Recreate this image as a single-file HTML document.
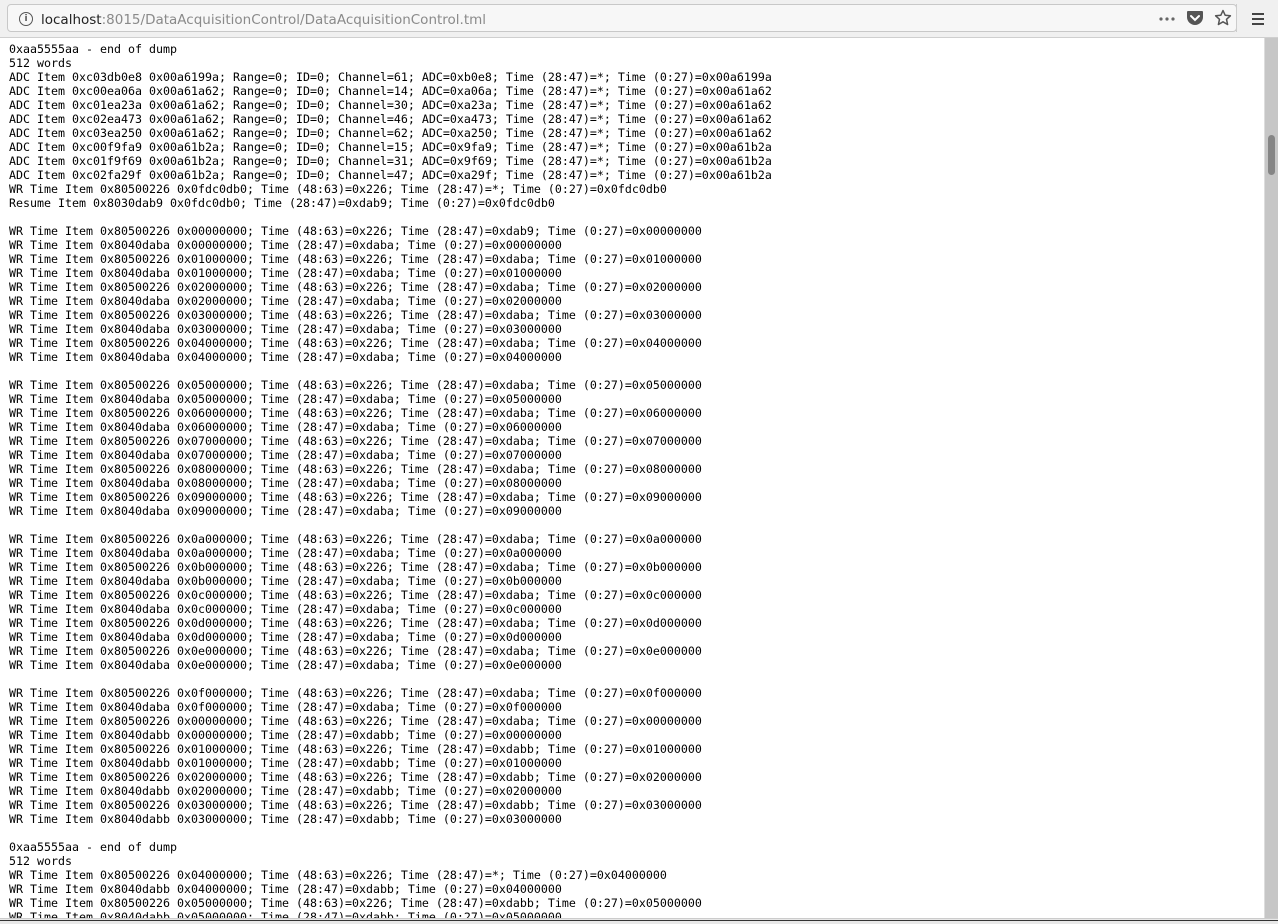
<!DOCTYPE html>
<html><head><meta charset="utf-8"><style>
html,body{margin:0;padding:0;width:1278px;height:923px;overflow:hidden;background:#fff;}
#bar{position:absolute;left:0;top:0;width:1278px;height:37px;background:#f0f0f0;border-bottom:1px solid #cfcfcf;}
#url{position:absolute;left:7px;top:4px;width:1230px;height:28px;background:#f7f7f7;border:1px solid #c8c8c8;border-radius:4px;box-sizing:border-box;font-family:"DejaVu Sans","Liberation Sans",sans-serif;font-size:13.5px;line-height:26px;color:#222;}
#url .h{position:absolute;left:33px;top:2px;}
#url .g{color:#8a8a8a;}
#info{position:absolute;left:11px;top:7px;width:12px;height:12px;border:1.3px solid #555;border-radius:50%;font:bold 9px/12px "DejaVu Sans",sans-serif;text-align:center;color:#555;}
pre{position:absolute;left:9px;top:42px;margin:0;font-family:"DejaVu Sans Mono","Liberation Mono",monospace;font-size:11.63px;line-height:14px;color:#000;}
#sb{position:absolute;left:1264px;top:38px;width:14px;height:880px;background:#c6c6c6;border-left:1px solid #ddd;}
#thumb{position:absolute;left:1268px;top:135px;width:7px;height:40px;background:#858585;border-radius:4px;}
#bot{position:absolute;left:0;top:918px;width:1278px;height:5px;background:#e8e8e8;border-top:1px solid #ccc;}
#bot2{position:absolute;left:0;top:920px;width:1278px;height:1px;background:#333;}
</style></head><body>
<div id="bar">
<div id="url"><div id="info">i</div><span class="h">localhost<span class="g">:8015/DataAcquisitionControl/DataAcquisitionControl.tml</span></span></div>
<svg style="position:absolute;left:1158px;top:12px" width="20" height="14"><circle cx="3" cy="7" r="1.6" fill="#666"/><circle cx="9" cy="7" r="1.6" fill="#666"/><circle cx="15" cy="7" r="1.6" fill="#666"/></svg>
<svg style="position:absolute;left:1186px;top:10px" width="18" height="16"><path d="M2 1h14a1 1 0 0 1 1 1v5a8 8 0 0 1-16 0V2a1 1 0 0 1 1-1z" fill="#555"/><path d="M5 6l4 4 4-4" stroke="#fff" stroke-width="2" fill="none" stroke-linecap="round"/></svg>
<svg style="position:absolute;left:1214px;top:9px" width="18" height="18"><path d="M9 1.5l2.2 4.8 5.2.5-3.9 3.5 1.1 5.2L9 12.8l-4.6 2.7 1.1-5.2L1.6 6.8l5.2-.5z" fill="none" stroke="#555" stroke-width="1.5" stroke-linejoin="round"/></svg>
<div style="position:absolute;left:1236px;top:4px;width:1px;height:28px;background:#ccc"></div>
<svg style="position:absolute;left:1251px;top:12px" width="14" height="14"><path d="M1 2h12M1 7h12M1 12h12" stroke="#444" stroke-width="2"/></svg>
</div>
<pre>0xaa5555aa - end of dump
512 words
ADC Item 0xc03db0e8 0x00a6199a; Range=0; ID=0; Channel=61; ADC=0xb0e8; Time (28:47)=*; Time (0:27)=0x00a6199a
ADC Item 0xc00ea06a 0x00a61a62; Range=0; ID=0; Channel=14; ADC=0xa06a; Time (28:47)=*; Time (0:27)=0x00a61a62
ADC Item 0xc01ea23a 0x00a61a62; Range=0; ID=0; Channel=30; ADC=0xa23a; Time (28:47)=*; Time (0:27)=0x00a61a62
ADC Item 0xc02ea473 0x00a61a62; Range=0; ID=0; Channel=46; ADC=0xa473; Time (28:47)=*; Time (0:27)=0x00a61a62
ADC Item 0xc03ea250 0x00a61a62; Range=0; ID=0; Channel=62; ADC=0xa250; Time (28:47)=*; Time (0:27)=0x00a61a62
ADC Item 0xc00f9fa9 0x00a61b2a; Range=0; ID=0; Channel=15; ADC=0x9fa9; Time (28:47)=*; Time (0:27)=0x00a61b2a
ADC Item 0xc01f9f69 0x00a61b2a; Range=0; ID=0; Channel=31; ADC=0x9f69; Time (28:47)=*; Time (0:27)=0x00a61b2a
ADC Item 0xc02fa29f 0x00a61b2a; Range=0; ID=0; Channel=47; ADC=0xa29f; Time (28:47)=*; Time (0:27)=0x00a61b2a
WR Time Item 0x80500226 0x0fdc0db0; Time (48:63)=0x226; Time (28:47)=*; Time (0:27)=0x0fdc0db0
Resume Item 0x8030dab9 0x0fdc0db0; Time (28:47)=0xdab9; Time (0:27)=0x0fdc0db0

WR Time Item 0x80500226 0x00000000; Time (48:63)=0x226; Time (28:47)=0xdab9; Time (0:27)=0x00000000
WR Time Item 0x8040daba 0x00000000; Time (28:47)=0xdaba; Time (0:27)=0x00000000
WR Time Item 0x80500226 0x01000000; Time (48:63)=0x226; Time (28:47)=0xdaba; Time (0:27)=0x01000000
WR Time Item 0x8040daba 0x01000000; Time (28:47)=0xdaba; Time (0:27)=0x01000000
WR Time Item 0x80500226 0x02000000; Time (48:63)=0x226; Time (28:47)=0xdaba; Time (0:27)=0x02000000
WR Time Item 0x8040daba 0x02000000; Time (28:47)=0xdaba; Time (0:27)=0x02000000
WR Time Item 0x80500226 0x03000000; Time (48:63)=0x226; Time (28:47)=0xdaba; Time (0:27)=0x03000000
WR Time Item 0x8040daba 0x03000000; Time (28:47)=0xdaba; Time (0:27)=0x03000000
WR Time Item 0x80500226 0x04000000; Time (48:63)=0x226; Time (28:47)=0xdaba; Time (0:27)=0x04000000
WR Time Item 0x8040daba 0x04000000; Time (28:47)=0xdaba; Time (0:27)=0x04000000

WR Time Item 0x80500226 0x05000000; Time (48:63)=0x226; Time (28:47)=0xdaba; Time (0:27)=0x05000000
WR Time Item 0x8040daba 0x05000000; Time (28:47)=0xdaba; Time (0:27)=0x05000000
WR Time Item 0x80500226 0x06000000; Time (48:63)=0x226; Time (28:47)=0xdaba; Time (0:27)=0x06000000
WR Time Item 0x8040daba 0x06000000; Time (28:47)=0xdaba; Time (0:27)=0x06000000
WR Time Item 0x80500226 0x07000000; Time (48:63)=0x226; Time (28:47)=0xdaba; Time (0:27)=0x07000000
WR Time Item 0x8040daba 0x07000000; Time (28:47)=0xdaba; Time (0:27)=0x07000000
WR Time Item 0x80500226 0x08000000; Time (48:63)=0x226; Time (28:47)=0xdaba; Time (0:27)=0x08000000
WR Time Item 0x8040daba 0x08000000; Time (28:47)=0xdaba; Time (0:27)=0x08000000
WR Time Item 0x80500226 0x09000000; Time (48:63)=0x226; Time (28:47)=0xdaba; Time (0:27)=0x09000000
WR Time Item 0x8040daba 0x09000000; Time (28:47)=0xdaba; Time (0:27)=0x09000000

WR Time Item 0x80500226 0x0a000000; Time (48:63)=0x226; Time (28:47)=0xdaba; Time (0:27)=0x0a000000
WR Time Item 0x8040daba 0x0a000000; Time (28:47)=0xdaba; Time (0:27)=0x0a000000
WR Time Item 0x80500226 0x0b000000; Time (48:63)=0x226; Time (28:47)=0xdaba; Time (0:27)=0x0b000000
WR Time Item 0x8040daba 0x0b000000; Time (28:47)=0xdaba; Time (0:27)=0x0b000000
WR Time Item 0x80500226 0x0c000000; Time (48:63)=0x226; Time (28:47)=0xdaba; Time (0:27)=0x0c000000
WR Time Item 0x8040daba 0x0c000000; Time (28:47)=0xdaba; Time (0:27)=0x0c000000
WR Time Item 0x80500226 0x0d000000; Time (48:63)=0x226; Time (28:47)=0xdaba; Time (0:27)=0x0d000000
WR Time Item 0x8040daba 0x0d000000; Time (28:47)=0xdaba; Time (0:27)=0x0d000000
WR Time Item 0x80500226 0x0e000000; Time (48:63)=0x226; Time (28:47)=0xdaba; Time (0:27)=0x0e000000
WR Time Item 0x8040daba 0x0e000000; Time (28:47)=0xdaba; Time (0:27)=0x0e000000

WR Time Item 0x80500226 0x0f000000; Time (48:63)=0x226; Time (28:47)=0xdaba; Time (0:27)=0x0f000000
WR Time Item 0x8040daba 0x0f000000; Time (28:47)=0xdaba; Time (0:27)=0x0f000000
WR Time Item 0x80500226 0x00000000; Time (48:63)=0x226; Time (28:47)=0xdaba; Time (0:27)=0x00000000
WR Time Item 0x8040dabb 0x00000000; Time (28:47)=0xdabb; Time (0:27)=0x00000000
WR Time Item 0x80500226 0x01000000; Time (48:63)=0x226; Time (28:47)=0xdabb; Time (0:27)=0x01000000
WR Time Item 0x8040dabb 0x01000000; Time (28:47)=0xdabb; Time (0:27)=0x01000000
WR Time Item 0x80500226 0x02000000; Time (48:63)=0x226; Time (28:47)=0xdabb; Time (0:27)=0x02000000
WR Time Item 0x8040dabb 0x02000000; Time (28:47)=0xdabb; Time (0:27)=0x02000000
WR Time Item 0x80500226 0x03000000; Time (48:63)=0x226; Time (28:47)=0xdabb; Time (0:27)=0x03000000
WR Time Item 0x8040dabb 0x03000000; Time (28:47)=0xdabb; Time (0:27)=0x03000000

0xaa5555aa - end of dump
512 words
WR Time Item 0x80500226 0x04000000; Time (48:63)=0x226; Time (28:47)=*; Time (0:27)=0x04000000
WR Time Item 0x8040dabb 0x04000000; Time (28:47)=0xdabb; Time (0:27)=0x04000000
WR Time Item 0x80500226 0x05000000; Time (48:63)=0x226; Time (28:47)=0xdabb; Time (0:27)=0x05000000
WR Time Item 0x8040dabb 0x05000000; Time (28:47)=0xdabb; Time (0:27)=0x05000000</pre>
<div id="sb"></div><div id="thumb"></div>
<div id="bot"></div><div id="bot2"></div>
</body></html>
